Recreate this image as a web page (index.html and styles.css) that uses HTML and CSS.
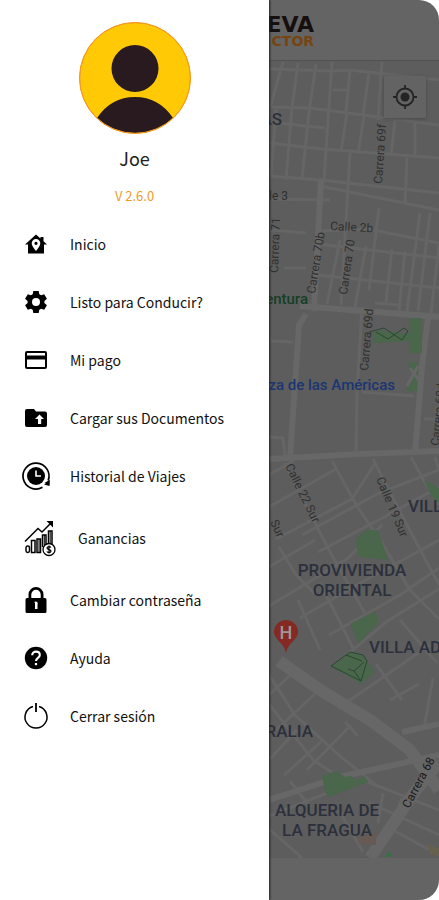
FILE: index.html
```html
<!DOCTYPE html>
<html lang="es">

<head>
    <meta charset="UTF-8">
    <meta name="viewport" content="width=device-width, initial-scale=1.0">
    <title>Conductor</title>
    <link rel="stylesheet" href="styles.css">
</head>

<body>
    <div class="app">
        <!-- menú lateral -->
        <aside class="drawer">
            <div class="profile">
                <svg class="avatar" viewBox="0 0 112 112" aria-hidden="true">
                    <clipPath id="avatar-clip"><circle cx="56" cy="56" r="55" /></clipPath>
                    <circle cx="56" cy="56" r="55.5" fill="#ffca05" stroke="#f59a23" />
                    <g clip-path="url(#avatar-clip)" fill="#291a20">
                        <circle cx="56" cy="46.500" r="23.500" />
                        <path d="M18 96Q32 75 56 75T94 96V112H18Z" />
                    </g>
                    <circle cx="56" cy="56" r="55.300" fill="none" stroke="#f59a23" />
                </svg>
                <h1 class="name">Joe</h1>
                <p class="version">V 2.6.0</p>
            </div>
            <nav class="menu">
                <a class="item" href="#inicio">
                    <svg class="icon" viewBox="0 0 24 24">
                        <path fill-rule="evenodd" d="M12 2.500L1 12.500h3V21.500h16v-9h3l-3.500-3.200V5h-3v1.500zM12 7a4.300 4.300 0 0 1 4.300 4.300c0 3.200-4.300 7.700-4.300 7.700s-4.300-4.500-4.300-7.700A4.300 4.300 0 0 1 12 7zm0 2.700a1.600 1.600 0 1 0 0 3.200a1.600 1.600 0 0 0 0-3.200z" />
                    </svg>
                    <span>Inicio</span>
                </a>
                <a class="item" href="#listo">
                    <svg class="icon" viewBox="0 0 24 24">
                        <path fill-rule="evenodd" d="M9.300 1h5.400l.6 3.200 1.800 1.050 3.100-1.100 2.700 4.700-2.500 2.100v2.100l2.500 2.100-2.700 4.700-3.100-1.100-1.800 1.050-.6 3.200H9.300l-.6-3.200-1.800-1.050-3.100 1.100-2.700-4.700 2.500-2.100v-2.100L1.100 8.850l2.700-4.700 3.100 1.100L8.700 4.200zM12 8a4 4 0 1 0 0 8a4 4 0 0 0 0-8z" />
                    </svg>
                    <span>Listo para Conducir?</span>
                </a>
                <a class="item" href="#pago">
                    <svg class="icon" viewBox="0 0 24 24">
                        <path fill-rule="evenodd" d="M3 3h18a2 2 0 0 1 2 2v14a2 2 0 0 1-2 2H3a2 2 0 0 1-2-2V5a2 2 0 0 1 2-2zM3 5v2.500h18V5zM3 11.500V19h18v-7.500z" />
                    </svg>
                    <span>Mi pago</span>
                </a>
                <a class="item" href="#documentos">
                    <svg class="icon" viewBox="0 0 24 24">
                        <path fill-rule="evenodd" d="M3 3h7l2 2.500h9a2 2 0 0 1 2 2V19a2 2 0 0 1-2 2H3a2 2 0 0 1-2-2V5a2 2 0 0 1 2-2zM15.500 8.500L11 13h3v5h3.200v-5H20z" />
                    </svg>
                    <span>Cargar sus Documentos</span>
                </a>
                <a class="item" href="#historial">
                    <svg class="icon" viewBox="0 0 24 24">
                        <path d="M18.500 23.300A13 13 0 1 1 24.200 16.500" fill="none" stroke="#000" stroke-width="1.700" />
                        <path d="M20.500 19l5.300-3.200-.1 5.700zM20 20.500l4-2 1.500 3.500z" />
                        <circle cx="12" cy="12" r="9" />
                        <path d="M12 6.500V12h5" fill="none" stroke="#fff" stroke-width="1.600" />
                    </svg>
                    <span>Historial de Viajes</span>
                </a>
                <a class="item item-big" href="#ganancias">
                    <svg class="icon icon-big" viewBox="0 0 32 36">
                        <g fill="none" stroke="#000" stroke-width="1.500">
                            <path d="M1 21.500L14 8.500l4 3.500L28 2" />
                            <rect x="2" y="26" width="3.500" height="6.500" rx="1.700" />
                            <rect x="7.500" y="20.500" width="3.500" height="12" />
                            <rect x="13" y="19" width="3.500" height="13.500" />
                            <path d="M18.500 27V15H22v10M24.500 24V11H28v13" />
                            <path d="M15 19v13M20.300 15v10M26.200 11v13" stroke-width="1" />
                            <circle cx="25" cy="29.500" r="6" fill="#fff" stroke-width="1.300" />
                            <path d="M27 27.500c-1-1.400-4-1-4 .6 0 1.900 4 1 4 3 0 1.700-3 2-4.200.4M25 25.500v8" stroke-width="1.200" />
                        </g>
                        <path d="M22.500 1H29v6.500z" />
                    </svg>
                    <span>Ganancias</span>
                </a>
                <a class="item" href="#contrasena">
                    <svg class="icon" viewBox="0 0 24 24">
                        <path fill-rule="evenodd" d="M3 10h1.500V6.500a7.500 7.500 0 0 1 15 0V10H21a1.500 1.500 0 0 1 1.500 1.500v12A1.500 1.500 0 0 1 21 25H3a1.500 1.500 0 0 1-1.500-1.500v-12A1.500 1.500 0 0 1 3 10zM7.300 10h9.400V6.500a4.700 4.700 0 0 0-9.400 0zM10 14.500h1v6.500h2.500v-4.500a2 2 0 1 0-3.500-2z" />
                    </svg>
                    <span>Cambiar contraseña</span>
                </a>
                <a class="item" href="#ayuda">
                    <svg class="icon" viewBox="0 0 24 24">
                        <circle cx="12" cy="12" r="11.200" />
                        <path d="M8.200 9.300c0-5 7.600-4.600 7.600-.3 0 3-3.800 2.800-3.800 6" fill="none" stroke="#fff" stroke-width="2.100" />
                        <path d="M10.900 17h2.200v2.200h-2.200z" fill="#fff" />
                    </svg>
                    <span>Ayuda</span>
                </a>
                <a class="item" href="#salir">
                    <svg class="icon" viewBox="0 0 24 24" fill="none" stroke="#000">
                        <path d="M9 2.500A11 11 0 1 0 15 2.500" stroke-width="1.500" />
                        <path d="M12-1v9" stroke-width="1.800" />
                    </svg>
                    <span>Cerrar sesión</span>
                </a>
            </nav>
        </aside>

        <!-- pantalla del mapa, oscurecida detrás del menú -->
        <main class="screen">
            <header class="topbar">
                <div class="logo">
                    <span class="logo-top">EVA</span>
                    <span class="logo-bottom">CTOR</span>
                </div>
            </header>
            <div class="map">
                <svg class="map-drawing" viewBox="269 61 170 797" preserveAspectRatio="xMinYMin slice">
                    <!-- calles -->
                    <g class="streets">
                        <path d="M269 69L332 71L350 70L439 80M271 107L310 108L439 125M269 122L325 128M269 143L322 149L439 158M269 176L320 180L439 193" />
                        <path d="M283 62L270 108M298 63L292 108L286 180M316 64L309 112L302 179M332 62L324 180M350 70L346 112M333 90H349M369 73L363 115M382 62L378 120M347 113L341 152M364 116L358 154M395 120L391 156M415 121V155" />
                        <path d="M276 109L271 175M270 199L330 200M271 230L306 233M284 268H306M271 341L293 342" />
                        <path d="M320 186L439 210M320 231L368 229L439 243M318 244L439 258M318 275L439 288M312 306L439 315M375 303L400 305" />
                        <path d="M350 153L341 305M379 208L369 290M407 158L405 204M340 240L327 304M366 246L355 307M392 249L386 302M405 251L399 311M420 213L407 311M430 213L418 311M439 245L431 313" />
                        <path d="M362 307L357 393L356 453M362 392L414 396M269 437L283 438L285 457M424 419H439" />
                        <path d="M269 475L293 461M269 507L336 469M276 539L352 499L376 462M302 535L379 493L439 470M318 552L386 516L439 487" />
                        <path d="M284 463L329 550L367 617M332 461L358 508L380 540M373 459L399 510L439 585M411 457L424 481L439 505M435 457L439 470" />
                        <path d="M269 567L315 540M269 606L347 559L382 525M300 618L357 585L439 540M329 635L400 595L439 568M341 660L386 622L439 589" />
                        <path d="M279 547L296 575L315 594M298 600L320 650M320 583L354 650M378 536L410 590L439 619M400 620L437 663M376 664L402 700" />
                        <path d="M269 695L296 670M276 730L317 692M350 700L338 709M350 700L430 645M390 700L419 684M433 678L424 728" />
                        <path d="M269 675L295 715L340 756L378 787M269 704L313 760L333 773M297 730L270 759M321 742L284 775M351 725L307 770M345 722L358 736" />
                        <path d="M269 816L365 778M290 781L310 807M269 829L302 858M339 810L363 852M368 782L439 810M383 793L378 823M402 798L390 833M370 803L439 835M389 828L439 855" />
                    </g>
                    <g class="avenues">
                        <path d="M321 180L314 311M306 314L299 325L290 458" />
                        <path d="M269 459L360 454L439 451M428 318L422 367L415 453M300 306L439 317" />
                        <path class="wide" d="M279 661L320 690L370 720L410 750L439 790" />
                        <path d="M269 800L340 777L439 755M402 732L439 724" />
                        <path class="wide" d="M439 762L413 794L370 858" />
                    </g>
                    <!-- parques -->
                    <g fill="#4a664b">
                        <path d="M373 330L409 334V318H422V353H409V341L373 343Z" />
                        <path d="M408 362H418L417 391H406L413 378Z" />
                        <path d="M424 480L439 488V503L432 497Z" />
                        <path d="M355 540L366 530H378L388 560L359 557Z" />
                        <path d="M350 624L375 611L379 622L359 643Z" />
                        <path d="M331 666L350 652L363 655L375 672L361 684Z" />
                        <path d="M322 776L337 771L345 777L351 776L356 780L364 776L368 782L329 797L325 792Z" />
                        <path d="M384 857L390 851L392 857Z" fill="#387043" />
                    </g>
                    <path d="M357 838L376 832V845L359 844Z" fill="#665a52" />
                    <path d="M426 844L439 848V856L430 854Z" fill="#66604f" />
                    <!-- senderos de los parques -->
                    <g fill="none" stroke="#294831">
                        <path d="M369 332L384 328L402 340L408 331L404 328L388 339L376 332" />
                        <path d="M331 666L350 652L363 655L367 661L361 681ZM346 655L362 661M348 669L354 671L364 662M354 671L361 681" />
                    </g>
                    <path d="M407 386L418 366M410 368L420 382" fill="none" stroke="#676767" stroke-width="3" />
                    <g class="road-name">
                        <text transform="translate(382 184) rotate(-86)">Carrera 69f</text>
                        <text transform="translate(278 273) rotate(-88)">Carrera 71</text>
                        <text transform="translate(315 294) rotate(-81)">Carrera 70b</text>
                        <text transform="translate(347 295) rotate(-82)">Carrera 70</text>
                        <text transform="translate(368 371) rotate(-85)">Carrera 69d</text>
                        <text transform="translate(439 446) rotate(-84)">Carrera 68d</text>
                        <text x="269" y="200">le 3</text>
                        <text transform="translate(330 230) rotate(3)">Calle 2b</text>
                        <text transform="translate(285 466) rotate(64)">Calle 22 Sur</text>
                        <text transform="translate(376 479) rotate(67)">Calle 19 Sur</text>
                        <text transform="translate(270 522) rotate(65)">Sur</text>
                        <text class="road-dark" transform="translate(409 809) rotate(-62)">Carrera 68</text>
                    </g>
                    <g class="place">
                        <text x="282" y="125" text-anchor="end">AS</text>
                        <text x="408" y="512">VILLA</text>
                        <text x="352" y="576" text-anchor="middle">PROVIVIENDA</text>
                        <text x="352" y="596" text-anchor="middle">ORIENTAL</text>
                        <text x="369" y="653">VILLA ADELA</text>
                        <text x="313" y="737" text-anchor="end">RALIA</text>
                        <text x="327" y="816" text-anchor="middle">ALQUERIA DE</text>
                        <text x="327" y="836" text-anchor="middle">LA FRAGUA</text>
                    </g>
                    <text class="poi poi-green" x="308" y="304" text-anchor="end">entura</text>
                    <text class="poi poi-blue" x="395" y="390" text-anchor="end">za de las Américas</text>
                    <path d="M286 653C284 642 274 640 274 632A12 12 0 0 1 298 632C298 640 288 642 286 653Z" fill="#842923" />
                    <text class="pin-letter" x="286" y="639" text-anchor="middle">H</text>
                </svg>
                <button class="locate" type="button" aria-label="Mi ubicación">
                    <svg viewBox="0 0 24 24" fill="none" stroke="#242424" stroke-width="1.800">
                        <circle cx="12" cy="12" r="8.500" />
                        <path d="M12 0v4M12 20v4M0 12h4M20 12h4" />
                        <circle cx="12" cy="12" r="4.500" fill="#242424" stroke="none" />
                    </svg>
                </button>
            </div>
            <footer class="bottombar"></footer>
        </main>
    </div>
</body>

</html>
```
FILE: styles.css
```css
* {
    box-sizing: border-box;
}

body {
    margin: 0;
    background-color: #fff;
    font-family: "Noto Sans CJK SC", "Noto Sans", sans-serif;
}

.app {
    display: flex;
    min-height: 100vh;
}

/* menú lateral */
.drawer {
    position: relative;
    z-index: 1;
    width: 61.3%;
    background-color: #fff;
    box-shadow: 1px 0 2px #222;
}

.profile {
    display: flex;
    flex-direction: column;
    align-items: center;
    padding-top: 22px;
}

.avatar {
    width: 112px;
    height: 112px;
}

.name {
    margin: 11px 0 0;
    font-size: 18px;
    font-weight: 400;
    line-height: 26px;
    color: #222;
}

.version {
    margin: 15px 0 0;
    font-size: 13px;
    line-height: 20px;
    color: #f09a2a;
}

.menu {
    display: flex;
    flex-direction: column;
    padding-top: 9px;
}

.item {
    display: flex;
    align-items: center;
    gap: 22px;
    height: 58px;
    padding-left: 24px;
    font-size: 14px;
    color: #111;
    text-decoration: none;
    white-space: nowrap;
}

.item-big {
    height: 66px;
}

.icon {
    flex: none;
    width: 24px;
    height: 24px;
    overflow: visible;
}

.icon-big {
    width: 32px;
    height: 36px;
}

/* pantalla del mapa */
.screen {
    display: flex;
    flex: 1;
    flex-direction: column;
    min-width: 0;
    overflow: hidden;
    background-color: #646464;
    border-radius: 0 20px 20px 0;
}

.topbar {
    height: 61px;
    padding-top: 14px;
    border-bottom: 1px solid #525252;
}

.logo {
    display: flex;
    flex-direction: column;
    align-items: flex-end;
    width: 45px;
    font-family: "DejaVu Sans", sans-serif;
    font-weight: 700;
}

.logo-top {
    font-size: 22px;
    line-height: 21px;
    color: #160f10;
}

.logo-bottom {
    font-size: 14px;
    line-height: 12px;
    color: #754411;
}

.map {
    position: relative;
    flex: 1;
    min-height: 0;
    overflow: hidden;
    background-color: #5d5d5d;
}

.map-drawing {
    display: block;
    width: 100%;
    height: 100%;
    font-family: Roboto, sans-serif;
}

.streets,
.avenues {
    fill: none;
    stroke: #656565;
    stroke-width: 3px;
}

.avenues {
    stroke: #676767;
    stroke-width: 6px;
}

.wide {
    stroke-width: 12px;
}

.road-name {
    font-size: 12px;
    fill: #303030;
}

.road-dark {
    fill: #1c1c1c;
}

.place {
    font-size: 17px;
    font-weight: 500;
    fill: #2b303c;
}

.poi {
    font-size: 15px;
    font-weight: 500;
}

.poi-green {
    fill: #173f26;
}

.poi-blue {
    fill: #1b3672;
}

.pin-letter {
    font-size: 18px;
    font-weight: 500;
    fill: #a09896;
}

.locate {
    position: absolute;
    top: 15px;
    right: 13px;
    display: flex;
    align-items: center;
    justify-content: center;
    width: 42px;
    height: 42px;
    padding: 0;
    border: none;
    background-color: #636363;
    box-shadow: 0 1px 3px #484848;
}

.locate svg {
    width: 24px;
    height: 24px;
}

.bottombar {
    height: 42px;
}
```
